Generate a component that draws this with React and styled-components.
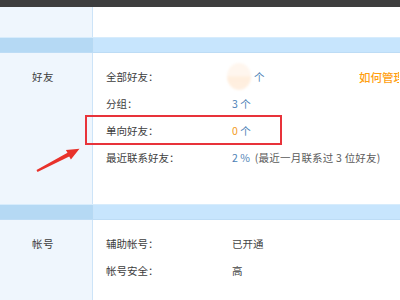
import React from 'react';
import styled, {createGlobalStyle} from 'styled-components';

const GlobalStyle = createGlobalStyle`
html, body {
    margin:0;
    padding:0;
    background:#fff;
}
body {
    width:400px;
    height:300px;
    overflow:hidden;
    font-family:"Noto Sans CJK SC", "Noto Sans", sans-serif;
    font-size:10.5px;
    color:#3d3d3d;
}
`

const TopBar = styled.div`
height:7px;
background-color:#3e3e3e;
`

const Section = styled.div`
position:relative;
display:grid;
grid-template-columns:93px 1fr;
height:${props => props.height}px;
`

const Side = styled.div`
background-color:#eff6fd;
border-right:1px solid #cde4f8;
padding-top:10px;
.side-title {
    height:27px;
    line-height:27px;
    padding-left:32px;
    letter-spacing:0.5px;
}
`

const Main = styled.div`
display:flex;
flex-direction:column;
padding:10px 0 0 13px;
white-space:nowrap;
overflow:hidden;
`

const Band = styled.div`
display:grid;
grid-template-columns:94px 1fr;
height:16px;
box-sizing:border-box;
border-top:1px solid #d7ecfc;
border-bottom:1px solid #bddcf5;
.band-left {
    background-color:#b5d9f4;
    border-right:1px solid #c9e4fa;
}
.band-right {
    background-color:#c7e5fd;
}
`

const Row = styled.div`
display:grid;
grid-template-columns:126px 127px 40px;
align-items:center;
height:27px;
.value {
    display:flex;
    align-items:center;
    color:${props => props.dark ? '#444' : '#4d7fb5'};
}
.note {
    color:#5a5a5a;
    margin-left:5px;
    letter-spacing:0.2px;
}
.orange {
    color:#f39a1e;
}
.link {
    color:#ff9f12;
    font-size:11.5px;
    font-weight:500;
    overflow:hidden;
}
`

const Avatar = styled.span`
display:inline-block;
width:24px;
height:27px;
margin-left:-5px;
margin-right:3px;
border-radius:50%;
background:linear-gradient(#fff6ee 0%, #fff6ee 45%, #ffeedd 55%, #fff0e2 100%);
filter:blur(1px);
`

const Highlight = styled.div`
position:absolute;
left:85px;
top:62px;
width:197px;
height:30px;
box-sizing:border-box;
border:2.5px solid #e8333a;
`

const Arrow = styled.svg`
position:absolute;
left:0;
top:0;
`

const App = () => {
    return (
        <>
            <GlobalStyle />
            <TopBar />
            <Section height={30}>
                <Side />
                <Main />
            </Section>
            <Band><div className="band-left"></div><div className="band-right"></div></Band>
            <Section height={151}>
                <Side><div className="side-title">好友</div></Side>
                <Main>
                    <Row>
                        <span>全部好友：</span>
                        <span className="value"><Avatar />个</span>
                        <span className="link">如何管理</span>
                    </Row>
                    <Row>
                        <span>分组：</span>
                        <span className="value">3&nbsp;个</span>
                    </Row>
                    <Row>
                        <span>单向好友：</span>
                        <span className="value"><span className="orange">0</span>&nbsp;个</span>
                    </Row>
                    <Row>
                        <span>最近联系好友：</span>
                        <span className="value">2&nbsp;%<span className="note">(最近一月联系过 3 位好友)</span></span>
                    </Row>
                </Main>
                <Highlight />
                <Arrow width="100" height="151" viewBox="0 53 100 151">
                    <polygon points="36.5,170.1 37.5,171.9 69.2,156.5 70.9,159.5 79.5,148.8 65.9,149.9 67.5,152.8" fill="#e8322b" />
                </Arrow>
            </Section>
            <Band><div className="band-left"></div><div className="band-right"></div></Band>
            <Section height={81}>
                <Side><div className="side-title">帐号</div></Side>
                <Main>
                    <Row dark>
                        <span>辅助帐号：</span>
                        <span className="value">已开通</span>
                    </Row>
                    <Row dark>
                        <span>帐号安全：</span>
                        <span className="value">高</span>
                    </Row>
                </Main>
            </Section>
        </>
    )
}

export default App;
